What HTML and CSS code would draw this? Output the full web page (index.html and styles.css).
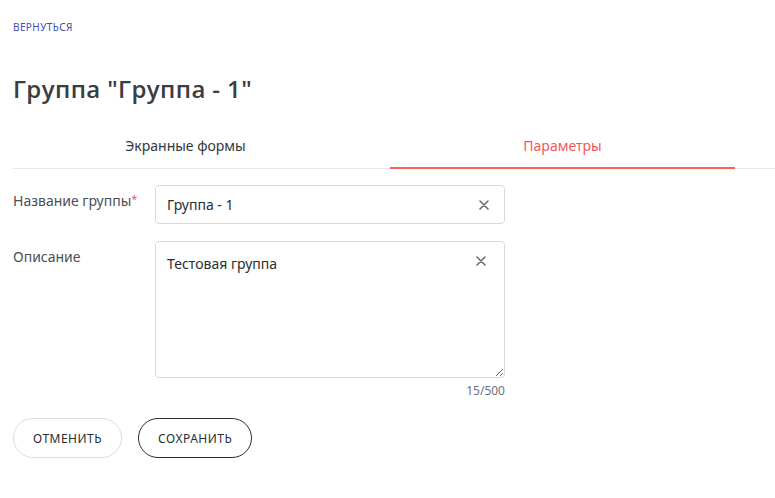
FILE: index.html
```html
<!DOCTYPE html>
<html lang="ru">
<head>
    <meta charset="UTF-8">
    <meta name="viewport" content="width=device-width, initial-scale=1.0">
    <title>Группа</title>
    <link rel="stylesheet" href="styles.css">
</head>
<body>
    <a class="back-link" href="#">Вернуться</a>

    <h1 class="page-title">Группа "Группа - 1"</h1>

    <div class="tabs">
        <div class="tab">Экранные формы</div>
        <div class="tab tab-active">Параметры</div>
    </div>

    <form class="group-form">
        <div class="form-row">
            <label class="form-label" for="group-name">Название группы<span class="required">*</span></label>
            <div class="field">
                <input type="text" id="group-name" value="Группа - 1">
                <span class="clear-btn">
                    <svg width="10" height="10" viewBox="0 0 10 10"><path d="M1 1L9 9M9 1L1 9" stroke="#5f6672" stroke-width="1.5" stroke-linecap="round"/></svg>
                </span>
            </div>
        </div>

        <div class="form-row">
            <label class="form-label" for="group-desc">Описание</label>
            <div class="field-wrap">
                <div class="field field-area">
                    <textarea id="group-desc">Тестовая группа</textarea>
                    <span class="clear-btn clear-area">
                        <svg width="10" height="10" viewBox="0 0 10 10"><path d="M1 1L9 9M9 1L1 9" stroke="#5f6672" stroke-width="1.5" stroke-linecap="round"/></svg>
                    </span>
                </div>
                <div class="counter">15/500</div>
            </div>
        </div>

        <div class="buttons">
            <button type="button" class="btn btn-cancel">Отменить</button>
            <button type="button" class="btn btn-save">Сохранить</button>
        </div>
    </form>
</body>
</html>
```

FILE: styles.css
```css
body {
    margin: 0;
    padding: 16px 0 0 13px;
    font-family: "Noto Sans", Arial, sans-serif;
    font-size: 14px;
    color: #333740;
    background: #fff;
}

.back-link {
    display: inline-block;
    font-size: 10px;
    letter-spacing: 0.4px;
    text-transform: uppercase;
    text-decoration: none;
    color: #3d4db7;
}

.page-title {
    margin: 38px 0 0 0;
    font-family: "Open Sans", Arial, sans-serif;
    font-size: 24px;
    font-weight: 600;
    letter-spacing: 0.4px;
    line-height: 32px;
    color: #3a3d42;
}

.tabs {
    display: flex;
    gap: 32px;
    margin-top: 22px;
    border-bottom: 1px solid #e3e7f0;
}

.tab {
    width: 345px;
    text-align: center;
    padding: 9px 0 12px;
    color: #333740;
    margin-bottom: -1px;
    border-bottom: 2px solid transparent;
}

.tab-active {
    color: #f0595a;
    border-bottom-color: #ff5f57;
}

.group-form {
    margin-top: 16px;
}

.form-row {
    display: flex;
    margin-bottom: 17px;
}

.form-label {
    width: 142px;
    padding-top: 6px;
    color: #4a4f58;
}

.required {
    color: #f0595a;
    font-size: 11px;
    vertical-align: top;
}

.field {
    position: relative;
    width: 350px;
    height: 39px;
    box-sizing: border-box;
    border: 1px solid #d5d9e4;
    border-radius: 4px;
}

.field input,
.field textarea {
    width: 100%;
    height: 100%;
    box-sizing: border-box;
    border: none;
    outline: none;
    background: transparent;
    font-family: inherit;
    font-size: 14px;
    color: #2a2d33;
    padding: 0 34px 0 11px;
}

.field-area {
    height: 137px;
}

.field textarea {
    padding-top: 12px;
    resize: both;
}

.clear-btn {
    position: absolute;
    right: 15px;
    top: 14px;
    line-height: 0;
}

.clear-area {
    right: 18px;
    top: 14px;
}

.counter {
    text-align: right;
    font-size: 12px;
    color: #6b7280;
    margin-top: 4px;
}

.form-row:nth-child(2) {
    margin-bottom: 19px;
}

.buttons {
    display: flex;
    gap: 16px;
}

.btn {
    height: 40px;
    padding: 0 19px;
    border-radius: 20px;
    background: #fff;
    font-family: inherit;
    font-size: 12px;
    letter-spacing: 0.5px;
    text-transform: uppercase;
    color: #2a2d33;
    cursor: pointer;
}

.btn-cancel {
    border: 1px solid #d9dde7;
}

.btn-save {
    border: 1px solid #2a2d33;
}
```
